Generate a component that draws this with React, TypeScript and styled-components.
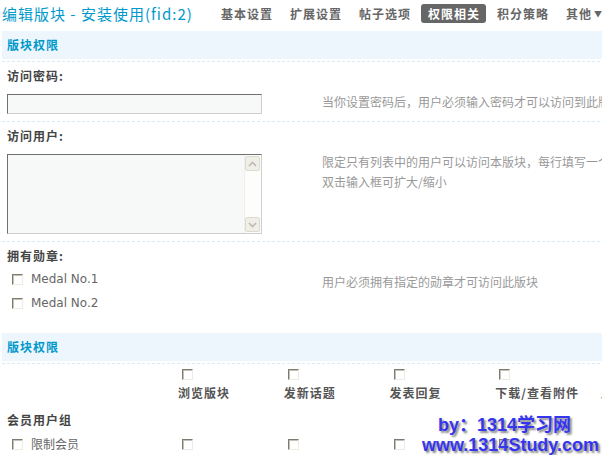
import styled, { createGlobalStyle } from "styled-components";

const GlobalStyle = createGlobalStyle`
  html, body {
    margin: 0;
    padding: 0;
    background: #fff;
    overflow: hidden;
  }
  body {
    font: 12px "Noto Sans CJK SC", sans-serif;
    color: #333;
  }
`;

const navItems = ["基本设置", "扩展设置", "帖子选项", "权限相关", "积分策略"];
const permColumns = ["浏览版块", "发新话题", "发表回复", "下载/查看附件", "上传附件"];

function App() {
  return (
    <Page>
      <GlobalStyle />
      <Header>
        <Title>编辑版块 - 安装使用(fid:2)</Title>
        <Nav>
          {navItems.map((item) => (
            <NavItem key={item} $active={item === "权限相关"}>
              {item}
            </NavItem>
          ))}
          <NavItem>
            其他<Arrow>▼</Arrow>
          </NavItem>
        </Nav>
      </Header>

      <Band>版块权限</Band>

      <Setting>
        <Label>访问密码:</Label>
        <Row>
          <Field>
            <Input type="password" />
          </Field>
          <Tip>当你设置密码后，用户必须输入密码才可以访问到此版块</Tip>
        </Row>
      </Setting>

      <Setting>
        <Label>访问用户:</Label>
        <Row>
          <Field>
            <TextBox>
              <TextArea />
              <ScrollBar>
                <ScrollBtn>
                  <svg width="9" height="6" viewBox="0 0 9 6">
                    <polyline points="1,5 4.5,1.5 8,5" fill="none" stroke="#bdbcb4" strokeWidth="1.6" />
                  </svg>
                </ScrollBtn>
                <ScrollBtn>
                  <svg width="9" height="6" viewBox="0 0 9 6">
                    <polyline points="1,1 4.5,4.5 8,1" fill="none" stroke="#bdbcb4" strokeWidth="1.6" />
                  </svg>
                </ScrollBtn>
              </ScrollBar>
            </TextBox>
          </Field>
          <Tip>
            限定只有列表中的用户可以访问本版块，每行填写一个用户名
            <br />
            双击输入框可扩大/缩小
          </Tip>
        </Row>
      </Setting>

      <Setting>
        <Label>拥有勋章:</Label>
        <Row>
          <MedalList>
            <MedalItem>
              <Check />
              Medal No.1
            </MedalItem>
            <MedalItem>
              <Check />
              Medal No.2
            </MedalItem>
          </MedalList>
          <Tip>用户必须拥有指定的勋章才可访问此版块</Tip>
        </Row>
      </Setting>

      <PermSection>
        <Band>版块权限</Band>
        <PermGrid>
          <PermHead />
          {permColumns.map((col) => (
            <PermHead key={col}>
              <Check $indent />
              <PermTitle>{col}</PermTitle>
            </PermHead>
          ))}
          <GroupTitle>会员用户组</GroupTitle>
          <MemberName>
            <Check />
            限制会员
          </MemberName>
          {permColumns.map((col) => (
            <MemberCell key={col}>
              <Check $indent />
            </MemberCell>
          ))}
        </PermGrid>
      </PermSection>

      <Watermark>
        <MarkLine $shift={16}>by：1314学习网</MarkLine>
        <MarkLine>www.1314Study.com</MarkLine>
      </Watermark>
    </Page>
  );
}

const Page = styled.div`
  position: relative;
  width: 760px;
  height: 455px;
  overflow: hidden;
`;

const Header = styled.div`
  display: flex;
  align-items: center;
  height: 27px;
  padding: 0 0 4px 2px;
`;

const Title = styled.h1`
  flex: none;
  width: 212px;
  margin: 0;
  font-size: 15px;
  font-weight: normal;
  letter-spacing: 1px;
  color: #0099cc;
  white-space: nowrap;
`;

const Nav = styled.ul`
  display: flex;
  gap: 4px;
  margin: 0;
  padding: 0;
  list-style: none;
`;

const NavItem = styled.li<{ $active?: boolean }>`
  height: 19px;
  line-height: 19px;
  padding: 0 6px 0 7px;
  border-radius: 3px;
  font-weight: bold;
  letter-spacing: 1px;
  white-space: nowrap;
  color: ${(p) => (p.$active ? "#fff" : "#666")};
  background: ${(p) => (p.$active ? "#666" : "transparent")};
`;

const Arrow = styled.span`
  font-size: 8px;
  vertical-align: 2px;
  margin-left: 2px;
`;

const Band = styled.h3`
  margin: 0 0 2px 2px;
  height: 28px;
  line-height: 28px;
  padding-left: 5px;
  background: #eef6fd;
  color: #0099cc;
  font-size: 12px;
  font-weight: bold;
  letter-spacing: 1px;
`;

const Setting = styled.div`
  margin-left: 2px;
  border-top: 1px dashed #d6eaf8;
`;

const Label = styled.div`
  padding: 3px 0 0 5px;
  line-height: 22px;
  font-weight: bold;
  letter-spacing: 1px;
  color: #444;
`;

const Row = styled.div`
  display: grid;
  grid-template-columns: 313px 1fr;
`;

const Field = styled.div`
  padding: 7px 0 7px 5px;
`;

const Tip = styled.div`
  padding: 5px 0 0 7px;
  line-height: 20px;
  color: #999;
  white-space: nowrap;
`;

const Input = styled.input`
  display: block;
  width: 255px;
  height: 20px;
  box-sizing: border-box;
  margin: 0;
  border: 1px solid;
  border-color: #6f6f6f #cfcfcf #cfcfcf #6f6f6f;
  background: #f7f8f8;
  outline: none;
`;

const TextBox = styled.div`
  display: flex;
  width: 255px;
  height: 80px;
  box-sizing: border-box;
  border: 1px solid;
  border-color: #6f6f6f #cfcfcf #cfcfcf #6f6f6f;
  background: #f7f8f8;
`;

const TextArea = styled.textarea`
  flex: 1;
  margin: 0;
  padding: 2px;
  border: 0;
  background: transparent;
  resize: none;
  outline: none;
  font: inherit;
`;

const ScrollBar = styled.div`
  display: flex;
  flex-direction: column;
  justify-content: space-between;
  width: 16px;
  padding: 1px 0;
  background: #fdfdfc;
  border-left: 1px solid #f0efea;
`;

const ScrollBtn = styled.div`
  display: flex;
  align-items: center;
  justify-content: center;
  width: 15px;
  height: 15px;
  box-sizing: border-box;
  border: 1px solid #dddbd1;
  border-radius: 2px;
  background: #efeee7;
`;

const Check = styled.span<{ $indent?: boolean }>`
  flex: none;
  display: inline-block;
  width: 11px;
  height: 11px;
  box-sizing: border-box;
  margin-left: ${(p) => (p.$indent ? "4px" : "0")};
  border: 1px solid;
  border-color: #7d7b70 #ecebe4 #ecebe4 #7d7b70;
  box-shadow: inset 1px 1px 0 #c4c2b8;
  background: #fff;
`;

const MedalList = styled.div`
  padding-left: 10px;
`;

const MedalItem = styled.div`
  display: flex;
  align-items: center;
  gap: 8px;
  height: 24px;
  font-family: "DejaVu Sans", sans-serif;
  color: #666;
`;

const PermSection = styled.div`
  margin-top: 18px;
`;

const PermGrid = styled.div`
  display: grid;
  grid-template-columns: 176px repeat(5, 105.75px);
  margin-left: 2px;
  border-top: 1px dashed #d6eaf8;
`;

const PermHead = styled.div`
  display: flex;
  flex-direction: column;
  align-items: flex-start;
  padding: 5px 0 4px;
`;

const PermTitle = styled.div`
  margin-top: 4px;
  line-height: 18px;
  font-weight: bold;
  letter-spacing: 1px;
  color: #555;
  white-space: nowrap;
`;

const GroupTitle = styled.div`
  grid-column: 1 / -1;
  padding-left: 5px;
  line-height: 28px;
  font-weight: bold;
  letter-spacing: 1px;
  color: #444;
`;

const MemberName = styled.div`
  display: flex;
  align-items: center;
  gap: 8px;
  padding-left: 10px;
  line-height: 20px;
  color: #666;
`;

const MemberCell = styled.div`
  display: flex;
  align-items: center;
`;

const Watermark = styled.div`
  position: absolute;
  left: 422px;
  top: 415px;
  font: bold 18px "Liberation Sans", "Noto Sans CJK SC", sans-serif;
  line-height: 20px;
  color: #3535ee;
  text-shadow: 2px 2px 2px #8a8a8a;
  white-space: nowrap;
`;

const MarkLine = styled.div<{ $shift?: number }>`
  padding-left: ${(p) => p.$shift ?? 0}px;
`;

export default App;
